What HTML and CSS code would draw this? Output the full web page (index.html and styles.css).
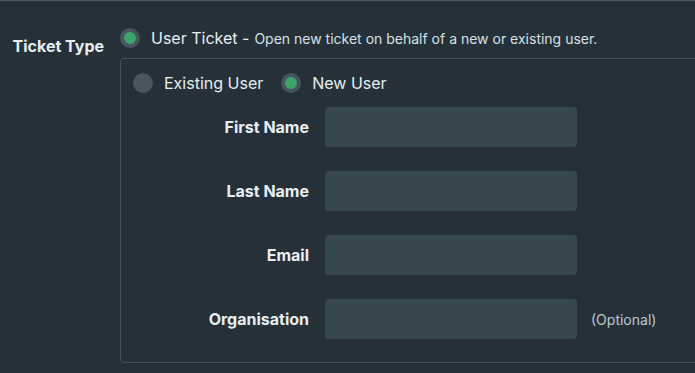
FILE: index.html
```html
<!DOCTYPE html>
<html lang="en">
<head>
    <meta charset="UTF-8">
    <meta name="viewport" content="width=device-width, initial-scale=1.0">
    <title>New Ticket</title>
    <link rel="stylesheet" href="styles.css">
</head>
<body>
    <div class="page">
        <div class="field-row">
            <label class="field-label">Ticket Type</label>
            <div class="field-body">
                <label class="radio">
                    <span class="radio-dot checked"></span>
                    <span class="radio-text">User Ticket -</span>
                    <span class="radio-desc">Open new ticket on behalf of a new or existing user.</span>
                </label>

                <div class="sub-box">
                    <div class="radio-group">
                        <label class="radio">
                            <span class="radio-dot"></span>
                            <span class="radio-text">Existing User</span>
                        </label>
                        <label class="radio">
                            <span class="radio-dot checked"></span>
                            <span class="radio-text">New User</span>
                        </label>
                    </div>

                    <div class="form-rows">
                        <div class="form-row">
                            <label class="row-label" for="firstName">First Name</label>
                            <input type="text" id="firstName" class="text-input">
                        </div>
                        <div class="form-row">
                            <label class="row-label" for="lastName">Last Name</label>
                            <input type="text" id="lastName" class="text-input">
                        </div>
                        <div class="form-row">
                            <label class="row-label" for="email">Email</label>
                            <input type="text" id="email" class="text-input">
                        </div>
                        <div class="form-row">
                            <label class="row-label" for="org">Organisation</label>
                            <input type="text" id="org" class="text-input">
                            <span class="hint">(Optional)</span>
                        </div>
                    </div>
                </div>
            </div>
        </div>
    </div>
</body>
</html>
```

FILE: styles.css
```css
body {
    margin: 0;
    background-color: #263038;
    font-family: Inter, "Noto Sans", sans-serif;
    color: #e6eef2;
    overflow: hidden;
}

.page {
    width: 780px;
    border-top: 1px solid #4b5862;
    padding-top: 27px;
}

.field-row {
    display: flex;
    align-items: flex-start;
}

.field-label {
    width: 104px;
    padding-right: 16px;
    padding-top: 8px;
    text-align: right;
    font-weight: 700;
    font-size: 16px;
    flex-shrink: 0;
}

.field-body {
    flex: 1;
}

.radio {
    display: flex;
    align-items: center;
}

.radio-dot {
    width: 20px;
    height: 20px;
    border-radius: 50%;
    background-color: #46555f;
    position: relative;
    flex-shrink: 0;
}

.radio-dot.checked::after {
    content: "";
    position: absolute;
    left: 4px;
    top: 4px;
    width: 12px;
    height: 12px;
    border-radius: 50%;
    background-color: #3aa66a;
}

.radio-text {
    margin-left: 11px;
    font-size: 16px;
}

.radio-desc {
    margin-left: 5px;
    font-size: 14px;
    color: #d6e0e6;
}

.sub-box {
    margin-top: 10px;
    border: 1px solid #45535d;
    border-radius: 4px;
    padding: 14px 12px 23px;
}

.radio-group {
    display: flex;
    gap: 18px;
}

.form-rows {
    margin-top: 14px;
    display: flex;
    flex-direction: column;
    gap: 24px;
}

.form-row {
    display: flex;
    align-items: center;
}

.row-label {
    width: 176px;
    text-align: right;
    font-weight: 700;
    font-size: 16px;
    margin-right: 16px;
}

.text-input {
    width: 252px;
    height: 40px;
    box-sizing: border-box;
    border: none;
    border-radius: 4px;
    background-color: #37474f;
    color: #e6eef2;
    padding: 0 12px;
    font-size: 14px;
}

.hint {
    margin-left: 14px;
    font-size: 14px;
    color: #b9c8d1;
}
```
